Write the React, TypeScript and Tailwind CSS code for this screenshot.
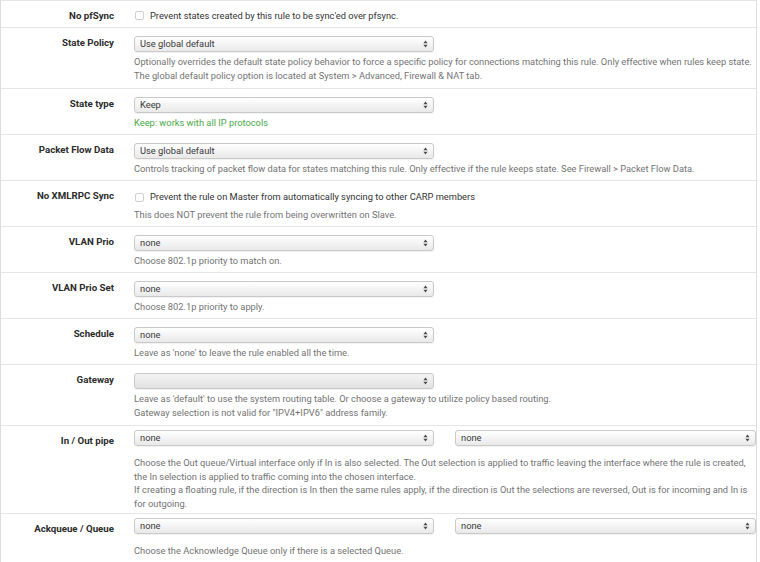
import React from "react";

function Arrows() {
  return (
    <svg width="5" height="8" viewBox="0 0 5 8" className="shrink-0">
      <path d="M2.5 0.5 L4.6 3.2 L0.4 3.2 Z" fill="#4a4a4a" />
      <path d="M2.5 7.5 L4.6 4.8 L0.4 4.8 Z" fill="#4a4a4a" />
    </svg>
  );
}

function Select({ value, disabled, w = "w-[300px]" }: { value: string; disabled?: boolean; w?: string }) {
  return (
    <div
      className={`${w} h-[16px] shrink-0 flex items-center justify-between rounded-[3px] border border-[#c9c9c9] pl-[5px] pr-[5px] shadow-[0_1px_1px_rgba(0,0,0,0.06)] ${
        disabled ? "bg-gradient-to-b from-[#f4f4f4] to-[#e2e2e2]" : "bg-gradient-to-b from-[#ffffff] to-[#e9e9e9]"
      }`}
    >
      <span className="text-[9.3px] leading-[14px] text-[#3a3a3a]">{value}</span>
      <Arrows />
    </div>
  );
}

function Help({ children, green }: { children: React.ReactNode; green?: boolean }) {
  return (
    <div className={`mt-[3px] whitespace-nowrap ${green ? "text-[#4aa84a]" : "text-[#737373]"}`}>{children}</div>
  );
}

function Check({ text }: { text: string }) {
  return (
    <div className="flex items-center h-[16px] text-[#333]">
      <span className="ml-[1px] w-[9px] h-[9px] rounded-[2px] border border-[#cfcfcf] bg-white shrink-0" />
      <span className="ml-[6px]">{text}</span>
    </div>
  );
}

function Row({
  label,
  children,
  tight,
  tall,
}: {
  label: string;
  children: React.ReactNode;
  tight?: boolean;
  tall?: boolean;
}) {
  return (
    <div className="flex border-t border-[#e5e5e5]">
      <div className="w-[113px] shrink-0 pt-[8px] text-right font-bold text-[9.7px] text-[#2b2b2b]">{label}</div>
      <div className={`ml-[20px] w-[622px] ${tall ? "pb-[6px]" : "pb-[4.5px]"} ${tight ? "pt-[4px]" : "pt-[8px]"}`}>
        {children}
      </div>
    </div>
  );
}

export default function App() {
  return (
    <div className="w-[760px] h-[562px] bg-white overflow-hidden">
      <div className="w-[757px] border-l border-r border-b border-[#dddddd] text-[9.3px] leading-[13.5px] font-[Roboto,'Liberation_Sans',sans-serif]">
        <Row label="No pfSync">
          <div className="h-[13.5px] flex items-center text-[#333]">
            <span className="ml-[1px] w-[9px] h-[9px] rounded-[2px] border border-[#cfcfcf] bg-white shrink-0" />
            <span className="ml-[6px]">Prevent states created by this rule to be sync'ed over pfsync.</span>
          </div>
        </Row>
        <Row label="State Policy" tall>
          <Select value="Use global default" />
          <Help>
            Optionally overrides the default state policy behavior to force a specific policy for connections matching this rule. Only effective when rules keep state.
            <br />
            The global default policy option is located at System &gt; Advanced, Firewall &amp; NAT tab.
          </Help>
        </Row>
        <Row label="State type">
          <Select value="Keep" />
          <Help green>Keep: works with all IP protocols</Help>
        </Row>
        <Row label="Packet Flow Data">
          <Select value="Use global default" />
          <Help>
            Controls tracking of packet flow data for states matching this rule. Only effective if the rule keeps state. See Firewall &gt; Packet Flow Data.
          </Help>
        </Row>
        <Row label="No XMLRPC Sync">
          <Check text="Prevent the rule on Master from automatically syncing to other CARP members" />
          <Help>This does NOT prevent the rule from being overwritten on Slave.</Help>
        </Row>
        <Row label="VLAN Prio">
          <Select value="none" />
          <Help>Choose 802.1p priority to match on.</Help>
        </Row>
        <Row label="VLAN Prio Set">
          <Select value="none" />
          <Help>Choose 802.1p priority to apply.</Help>
        </Row>
        <Row label="Schedule">
          <Select value="none" />
          <Help>Leave as 'none' to leave the rule enabled all the time.</Help>
        </Row>
        <Row label="Gateway" tall>
          <Select value="" disabled />
          <Help>
            Leave as 'default' to use the system routing table. Or choose a gateway to utilize policy based routing.
            <br />
            Gateway selection is not valid for "IPV4+IPV6" address family.
          </Help>
        </Row>
        <Row label="In / Out pipe" tight>
          <div className="flex gap-[21px]">
            <Select value="none" />
            <Select value="none" w="w-[301px]" />
          </div>
          <div className="mt-[10px] mb-[-2px] whitespace-nowrap text-[#737373]">
            Choose the Out queue/Virtual interface only if In is also selected. The Out selection is applied to traffic leaving the interface where the rule is created,
            <br />
            the In selection is applied to traffic coming into the chosen interface.
            <br />
            If creating a floating rule, if the direction is In then the same rules apply, if the direction is Out the selections are reversed, Out is for incoming and In is
            <br />
            for outgoing.
          </div>
        </Row>
        <Row label="Ackqueue / Queue" tight>
          <div className="flex gap-[21px]">
            <Select value="none" />
            <Select value="none" w="w-[301px]" />
          </div>
          <div className="mt-[10px] pb-[4px] text-[#737373]">Choose the Acknowledge Queue only if there is a selected Queue.</div>
        </Row>
      </div>
    </div>
  );
}
